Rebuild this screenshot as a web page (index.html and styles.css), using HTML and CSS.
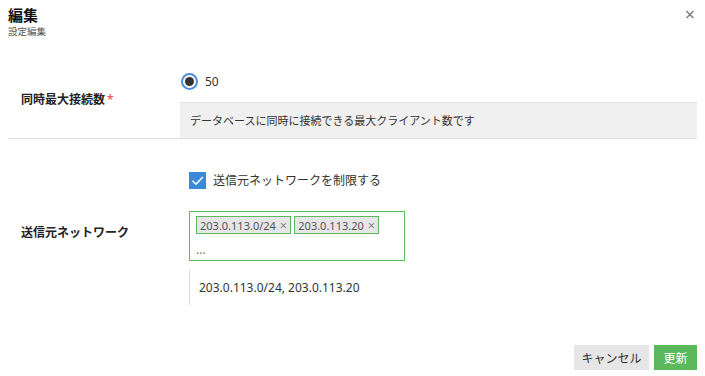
FILE: index.html
```html
<!DOCTYPE html>
<html lang="ja">
<head>
    <meta charset="UTF-8">
    <title>編集</title>
    <link rel="stylesheet" href="styles.css">
</head>
<body>
    <div class="dialog">
        <div class="head">
            <div class="title">編集</div>
            <div class="sub">設定編集</div>
            <span class="close">&times;</span>
        </div>

        <div class="row row-conn">
            <div class="label">同時最大接続数<span class="req">*</span></div>
            <div class="field">
                <label class="radio"><span class="dot"></span>50</label>
                <div class="help">データベースに同時に接続できる最大クライアント数です</div>
            </div>
        </div>

        <div class="row row-net">
            <div class="label">送信元ネットワーク</div>
            <div class="field field-net">
                <label class="check">
                    <span class="box">
                        <svg width="17" height="17" viewBox="0 0 17 17"><path d="M3.5 8.8 L7 12.2 L13.8 5" fill="none" stroke="#fff" stroke-width="1.6"/></svg>
                    </span>
                    送信元ネットワークを制限する
                </label>
                <div class="tags">
                    <div class="tag-list">
                        <span class="tag">203.0.113.0/24<i>&times;</i></span>
                        <span class="tag">203.0.113.20<i>&times;</i></span>
                    </div>
                    <div class="more">...</div>
                </div>
                <div class="value">203.0.113.0/24, 203.0.113.20</div>
            </div>
        </div>

        <div class="foot">
            <button class="btn btn-cancel">キャンセル</button>
            <button class="btn btn-ok">更新</button>
        </div>
    </div>
</body>
</html>
```

FILE: styles.css
```css
body{
    margin: 0;
    font-family: "Noto Sans", "Noto Sans CJK JP", sans-serif;
    font-size: 12px;
    color: #333;
    background: #fff;
}
.dialog{
    width: 705px;
    height: 376px;
    padding: 0 8px;
    box-sizing: border-box;
}
.head{
    position: relative;
    padding-top: 4px;
    height: 52px;
}
.title{
    font-size: 15px;
    font-weight: bold;
    color: #111;
    line-height: 22px;
}
.sub{
    font-size: 9.5px;
    color: #555;
    line-height: 12px;
}
.close{
    position: absolute;
    right: 2px;
    top: 2px;
    font-size: 18px;
    color: #777;
}
.row{
    display: flex;
    align-items: center;
}
.row-conn{
    border-bottom: 1px solid #ddd;
    align-items: flex-start;
}
.row-conn .label{
    padding-top: 34px;
}
.label{
    width: 172px;
    padding-left: 13px;
    box-sizing: border-box;
    font-weight: bold;
    color: #222;
    flex-shrink: 0;
}
.req{
    color: #e44;
    margin-left: 2px;
    font-weight: normal;
}
.field{
    flex: 1;
}
.radio{
    display: flex;
    align-items: center;
    height: 18px;
    margin: 16px 0 0 1px;
    font-size: 12px;
}
.dot{
    width: 13px;
    height: 13px;
    border: 2px solid #4a90d9;
    border-radius: 50%;
    margin-right: 7px;
    position: relative;
}
.dot:after{
    content: "";
    position: absolute;
    left: 2px;
    top: 2px;
    width: 9px;
    height: 9px;
    border-radius: 50%;
    background: #333;
}
.help{
    margin-top: 12px;
    height: 36px;
    line-height: 36px;
    padding-left: 10px;
    background: #f0f0f0;
    border-top: 1px solid #e2e2e2;
    box-sizing: border-box;
    font-size: 11px;
}
.row-net{
    padding-top: 32px;
}
.row-net .label{
    margin-top: -12px;
}
.field-net{
    padding-left: 9px;
}
.check{
    display: flex;
    align-items: center;
    height: 18px;
}
.box{
    width: 17px;
    height: 17px;
    background: #3b8ad9;
    margin-right: 7px;
    display: block;
}
.box svg{
    display: block;
}
.tags{
    width: 216px;
    height: 50px;
    margin-top: 22px;
    border: 1px solid #5cb85c;
    box-sizing: border-box;
    padding: 4px 6px;
}
.tag-list{
    display: flex;
    gap: 3px;
}
.tag{
    display: inline-flex;
    align-items: center;
    height: 18px;
    padding: 0 3px;
    border: 1px solid #5cb85c;
    background: #e6e6e6;
    box-sizing: border-box;
    font-size: 11px;
    color: #555;
}
.tag i{
    font-style: normal;
    font-size: 13px;
    line-height: 1;
    color: #888;
    margin-left: 4px;
}
.more{
    color: #777;
    line-height: 14px;
    margin-top: 9px;
}
.value{
    margin-top: 9px;
    height: 35px;
    line-height: 35px;
    border-left: 1px solid #ddd;
    padding-left: 9px;
}
.foot{
    display: flex;
    justify-content: flex-end;
    gap: 5px;
    margin-top: 40px;
}
.btn{
    border: none;
    height: 25px;
    font-family: inherit;
    font-size: 12px;
    padding: 0;
    white-space: nowrap;
}
.btn-cancel{
    background: #e6e6e6;
    color: #333;
    width: 75px;
}
.btn-ok{
    background: #5cb85c;
    color: #fff;
    width: 43px;
}
```
